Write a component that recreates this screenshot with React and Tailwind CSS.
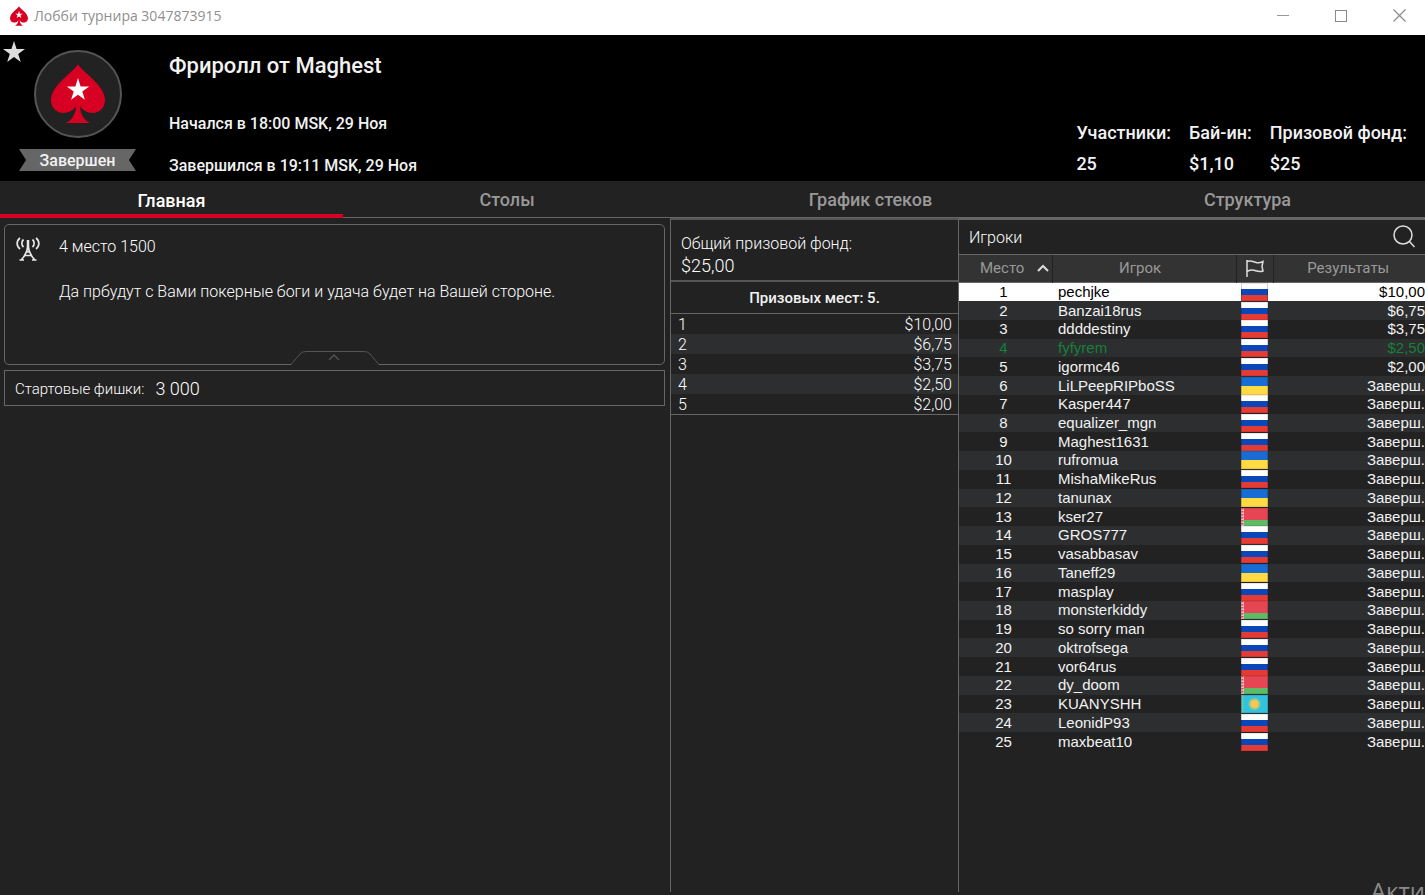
import React from "react";

const RU = "ru", UA = "ua", BY = "by", KZ = "kz";
const DONE = "Заверш.";

const players = [
  ["pechjke", RU, "$10,00"],
  ["Banzai18rus", RU, "$6,75"],
  ["ddddestiny", RU, "$3,75"],
  ["fyfyrem", RU, "$2,50"],
  ["igormc46", RU, "$2,00"],
  ["LiLPeepRIPboSS", UA, DONE],
  ["Kasper447", RU, DONE],
  ["equalizer_mgn", RU, DONE],
  ["Maghest1631", RU, DONE],
  ["rufromua", UA, DONE],
  ["MishaMikeRus", RU, DONE],
  ["tanunax", UA, DONE],
  ["kser27", BY, DONE],
  ["GROS777", RU, DONE],
  ["vasabbasav", RU, DONE],
  ["Taneff29", UA, DONE],
  ["masplay", RU, DONE],
  ["monsterkiddy", BY, DONE],
  ["so sorry man", RU, DONE],
  ["oktrofsega", RU, DONE],
  ["vor64rus", RU, DONE],
  ["dy_doom", BY, DONE],
  ["KUANYSHH", KZ, DONE],
  ["LeonidP93", RU, DONE],
  ["maxbeat10", RU, DONE],
];

const prizes = ["$10,00", "$6,75", "$3,75", "$2,50", "$2,00"];
const tabs = ["Главная", "Столы", "График стеков", "Структура"];
const stats = [
  ["Участники:", "25"],
  ["Бай-ин:", "$1,10"],
  ["Призовой фонд:", "$25"],
];

const SPADE =
  "M27 0C24 7 0 21 0 36C0 44 6 49 12 49C18 49 23 46 25 42H27.6V42H29C31 46 36 49 42 49C48 49 54 44 54 36C54 21 30 7 27 0Z";
const SPADE_FOOT = "M25 41C25 50 21 56 15 59H39C33 56 29 50 29 41Z";
const SPADE_STAR =
  "M27 14L29.6 22.4H38.2L31.3 27.5L33.9 35.8L27 30.7L20.1 35.8L22.7 27.5L15.8 22.4H24.4Z";

function Spade({ className }) {
  return (
    <svg viewBox="0 0 54 59" className={className} aria-hidden="true">
      <path d={SPADE} fill="#d70022" />
      <path d={SPADE_FOOT} fill="#d70022" />
      <path d={SPADE_STAR} fill="#fff" />
    </svg>
  );
}

function Flag({ code }) {
  return (
    <svg viewBox="0 0 27 18" preserveAspectRatio="none" className="mx-auto block h-[18px] w-[27px]" aria-hidden="true">
      {code === RU && (
        <>
          <rect width="27" height="6" fill="#fff" />
          <rect y="6" width="27" height="6" fill="#0b47b9" />
          <rect y="12" width="27" height="6" fill="#e53b35" />
        </>
      )}
      {code === UA && (
        <>
          <rect width="27" height="9" fill="#176dd4" />
          <rect y="9" width="27" height="9" fill="#ffda44" />
        </>
      )}
      {code === BY && (
        <>
          <rect width="27" height="12" fill="#e64553" />
          <rect y="12" width="27" height="6" fill="#5dbb67" />
          <rect width="3" height="18" fill="#f3c6cb" />
          <path d="M1.5 0V18" stroke="#d9475a" strokeWidth="2" strokeDasharray="1.5 1.5" />
        </>
      )}
      {code === KZ && (
        <>
          <rect width="27" height="18" fill="#2fc3e0" />
          <path d="M1.5 0V18" stroke="#8fc77c" strokeWidth="2" strokeDasharray="1.5 1" />
          <circle cx="13.5" cy="9" r="6" fill="#8fc99a" />
          <circle cx="13.5" cy="9" r="4" fill="#fcc64a" />
        </>
      )}
      <rect x="0.5" y="0" width="26" height="18" fill="none" stroke="#000" strokeOpacity="0.18" />
    </svg>
  );
}

function TitleBar() {
  return (
    <div className="flex h-[35px] shrink-0 items-center bg-white pl-2.5 font-['Open_Sans','Noto_Sans',sans-serif]">
      <Spade className="mb-1 h-5 w-[18px]" />
      <span className="mb-1 ml-1.5 text-sm leading-5 text-[#8f8f8f]">Лобби турнира 3047873915</span>
      <div className="mb-1 ml-auto flex">
        <button aria-label="Свернуть" className="flex h-6 w-[58px] items-center justify-center">
          <svg width="12" height="12" className="block"><path d="M0 5.5H12" stroke="#999" /></svg>
        </button>
        <button aria-label="Развернуть" className="flex h-6 w-[58px] items-center justify-center">
          <svg width="12" height="12" className="block"><rect x="0.5" y="0.5" width="11" height="11" fill="none" stroke="#8a8a8a" /></svg>
        </button>
        <button aria-label="Закрыть" className="mr-px flex h-6 w-[54px] items-center justify-center pl-1">
          <svg width="13" height="13" className="block"><path d="M0.5 0.5L12.5 12.5M12.5 0.5L0.5 12.5" stroke="#8a8a8a" strokeWidth="1.2" /></svg>
        </button>
      </div>
    </div>
  );
}

function Header() {
  return (
    <header className="flex h-[146px] shrink-0 bg-black font-medium text-[#f2f2f2]">
      <button aria-label="Избранное" className="mt-1.5 ml-[3px] h-[22px] w-[22px] shrink-0">
        <svg viewBox="0 0 22 22" className="block"><path d="M11 0L13.6 8H22L15.2 13L17.8 21L11 16L4.2 21L6.8 13L0 8H8.4Z" fill="#ddd" /></svg>
      </button>
      <div className="-ml-1.5 flex w-[117px] shrink-0 flex-col items-center pt-[15px]">
        <div className="flex h-[88px] w-[88px] items-center justify-center rounded-full border-2 border-[#545454] bg-[#222]">
          <Spade className="mb-0.5 h-[59px] w-[54px]" />
        </div>
        <div className="mt-[11px] flex h-[22px] w-full items-center justify-center bg-[#666] pt-0.5 text-base leading-5 [clip-path:polygon(0_0,100%_0,94%_50%,100%_100%,0_100%,6%_50%)]">
          Завершен
        </div>
      </div>
      <div className="ml-[33px] flex flex-col pt-[17px]">
        <h1 className="text-[22px] leading-7">Фриролл от Maghest</h1>
        <p className="mt-8 text-base leading-6">Начался в 18:00 MSK, 29 Ноя</p>
        <p className="mt-[18px] text-base leading-6">Завершился в 19:11 MSK, 29 Ноя</p>
      </div>
      <dl className="ml-auto flex gap-[18px] pt-[86px] pr-[18px] text-lg">
        {stats.map(([label, value]) => (
          <div key={label}>
            <dt className="leading-6">{label}</dt>
            <dd className="mt-[7px] leading-6">{value}</dd>
          </div>
        ))}
      </dl>
    </header>
  );
}

function Tabs() {
  return (
    <nav
      role="tablist"
      className="grid h-[37px] shrink-0 grid-cols-[343fr_328fr_399fr_355fr] border-b border-[#666] text-lg leading-6 font-medium"
    >
      {tabs.map((tab, i) => (
        <button
          key={tab}
          role="tab"
          aria-selected={i === 0}
          className={
            i === 0
              ? "-mb-px border-b-4 border-[#d70022] pt-[7px] text-white"
              : "pt-0.5 text-[#999]"
          }
        >
          {tab}
        </button>
      ))}
    </nav>
  );
}

function TowerIcon() {
  return (
    <svg width="24" height="24" viewBox="0 0 24 24" fill="none" stroke="#e8e8e8" strokeWidth="1.7" className="mt-3 block shrink-0">
      <path d="M4 1C0.2 4 0.2 9 4 12M20 1C23.8 4 23.8 9 20 12M7.5 2.5C5.3 4.5 5.3 8 7.5 10M16.5 2.5C18.7 4.5 18.7 8 16.5 10" />
      <path d="M12 3V10" strokeWidth="2.5" />
      <path d="M12 8C11.5 14 9 19 5.5 22.5M12 8C12.5 14 15 19 18.5 22.5M9.5 15H14.5M8 18.5H16M3.5 23H8M16 23H20.5" />
    </svg>
  );
}

function Info() {
  return (
    <section className="flex min-w-0 flex-1 flex-col gap-[5px] pt-1.5 pr-[5px] pl-1 font-light text-white">
      <div className="relative flex h-[141px] rounded-[5px] border border-[#666] pl-[11px]">
        <TowerIcon />
        <div className="ml-[19px] pt-[11px] text-base leading-[22px]">
          <p>4 место 1500</p>
          <p className="mt-[23px]">Да прбудут с Вами покерные боги и удача будет на Вашей стороне.</p>
        </div>
        <button aria-label="Свернуть описание" className="absolute inset-x-0 -bottom-px mx-auto h-3.5 w-[88px]">
          <svg width="88" height="14" fill="none" stroke="#555" className="block">
            <path d="M0 14L9 3Q11 0.5 15 0.5H73Q77 0.5 79 3L88 14Z" fill="#222" stroke="none" />
            <path d="M0 13.5L9 3Q11 0.5 15 0.5H73Q77 0.5 79 3L88 13.5" />
            <path d="M38 9L43 4L48 9" strokeWidth="1.3" />
          </svg>
        </button>
      </div>
      <p className="flex h-9 items-center border border-[#666] pt-0.5 pl-2.5 text-[15px]">
        Стартовые фишки: <span className="ml-[11px] text-lg">3 000</span>
      </p>
    </section>
  );
}

function PrizePool() {
  return (
    <section className="w-[289px] shrink-0 border-x border-t-2 border-x-[#666] border-t-[#555] text-white">
      <div className="h-[62px] border-b-2 border-[#555] pt-[13px] pl-2.5 font-light">
        <p className="text-base leading-[22px]">Общий призовой фонд:</p>
        <p className="text-lg leading-[22px]">$25,00</p>
      </div>
      <table className="w-full border-b border-[#666] text-base leading-[18px] font-light">
        <caption className="h-8 border-b border-[#666] pt-px text-[15px] leading-[31px] font-medium text-[#f2f2f2]">Призовых мест: 5.</caption>
        <tbody>
          {prizes.map((prize, i) => (
            <tr key={prize} className="h-5 even:bg-[#2c2e30]">
              <td className="p-0 pt-0.5 pl-[7px]">{i + 1}</td>
              <td className="p-0 pt-0.5 pr-1.5 text-right">{prize}</td>
            </tr>
          ))}
        </tbody>
      </table>
    </section>
  );
}

function rowClass(i) {
  if (i === 0) return "bg-white text-black";
  if (i === 3) return "bg-[#2c2e30] text-[#16803a]";
  return i % 2 ? "bg-[#2c2e30] text-[#f2f2f2]" : "text-[#f2f2f2]";
}

function Players() {
  return (
    <section className="w-[466px] shrink-0 border-t-2 border-[#666]">
      <div className="flex h-[35px] items-center justify-between border-b border-[#666] px-2.5">
        <h2 className="pt-0.5 text-base font-light text-white">Игроки</h2>
        <button aria-label="Поиск" className="pb-0.5">
          <svg width="22" height="23" fill="none" stroke="#ddd" strokeWidth="1.5" className="block">
            <circle cx="10" cy="10" r="9" />
            <path d="M16.5 16.5L21.5 22" />
          </svg>
        </button>
      </div>
      <table className="h-[496px] w-full table-fixed text-[15px] leading-[18px]">
        <thead className="bg-[#333] text-[#999]">
          <tr className="h-[27px] border-b border-[#666]">
            <th className="w-[93px] border-r border-[#222] p-0 font-normal">
              <button className="flex w-full items-center pl-[21px]">
                Место
                <svg width="12" height="8" className="mr-[3px] ml-auto block" fill="none" stroke="#ddd" strokeWidth="2">
                  <path d="M1 7L6 2L11 7" />
                </svg>
              </button>
            </th>
            <th className="w-[184px] border-r border-[#222] p-0 pr-2 font-normal">Игрок</th>
            <th className="w-[37px] border-r border-[#222] p-0" aria-label="Страна">
              <svg width="18" height="17" fill="none" stroke="#ddd" strokeWidth="1.5" className="mx-auto block">
                <path d="M1 0V17M1 1.5C5 0 8 2 10 2.5C12 3 15 2.5 17 1.5L16 6.5L17 11C13 12.500 10 10.500 8 10.200C5 9.800 3 10.500 1 11.500" />
              </svg>
            </th>
            <th className="p-0 pr-0.5 font-normal">Результаты</th>
          </tr>
        </thead>
        <tbody className="font-['Liberation_Sans',Arial,sans-serif]">
          {players.map(([name, code, result], i) => (
            <tr key={name} className={rowClass(i)}>
              <td className="p-0 pr-1 text-center">{i + 1}</td>
              <td className="p-0 pl-1.5">{name}</td>
              <td className="p-0"><Flag code={code} /></td>
              <td className="p-0 text-right">{result}</td>
            </tr>
          ))}
        </tbody>
      </table>
    </section>
  );
}

export default function App() {
  return (
    <div className="relative flex min-h-screen flex-col overflow-hidden bg-[#222] font-[Roboto,sans-serif]">
      <TitleBar />
      <Header />
      <Tabs />
      <main className="flex flex-1 pb-[3px]">
        <Info />
        <PrizePool />
        <Players />
      </main>
      <span className="absolute right-0 -bottom-2.5 font-['Open_Sans','Noto_Sans',sans-serif] text-2xl leading-7 text-[#8a8a8a]">Акти</span>
    </div>
  );
}
